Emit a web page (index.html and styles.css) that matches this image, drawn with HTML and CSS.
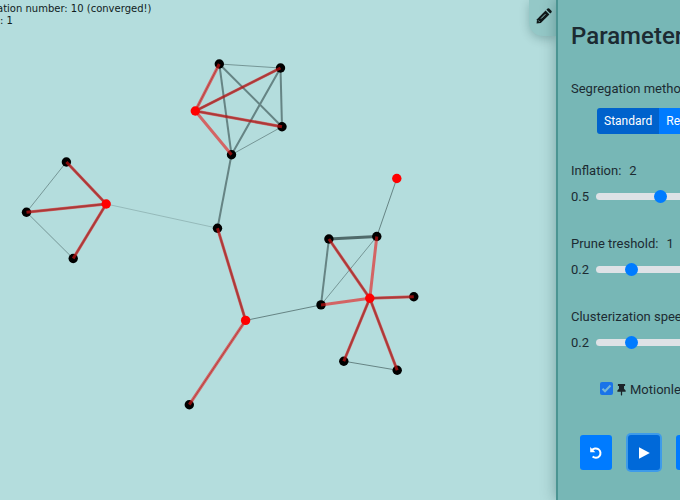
FILE: index.html
```html
<!DOCTYPE html>
<html lang="en">
<head>
<meta charset="utf-8">
<title>Graph clustering</title>
<link rel="stylesheet" href="styles.css">
</head>
<body>
<div class="app">
  <main class="stage">
    <svg class="graph" width="556" height="500" aria-label="Clustered graph">
      <g class="edges">
        <path class="w2" d="M219.300 64L231.500 154.700"/>
        <path class="w1" d="M219.300 64L280.500 68M282 126.700L231.500 154.700"/>
        <path class="w2" d="M219.300 64L282 126.700M280.500 68L231.500 154.700M280.500 68L282 126.700"/>
        <path class="w2" d="M231.500 154.700L217.500 228.200"/>
        <path class="w0" d="M106.200 204L217.500 228.200"/>
        <path class="w1" d="M66.400 162L26.500 212.200L73.200 258.500"/>
        <path class="w1 mid" d="M245.600 320.400L321 304.900M396.800 178.500L376.800 236.500M343.800 361.200L397.200 370.200"/>
        <path class="w1" d="M376.800 236.500L321 304.900"/>
        <path class="w2" d="M328.900 239L321 304.900"/>
        <path class="w3" d="M328.900 239L376.800 236.500"/>
        <path class="core" d="M195.300 111L280.500 68M195.300 111L282 126.700M106.200 204L26.500 212.200M106.200 204L66.400 162M106.200 204L73.200 258.500M217.500 228.200L245.600 320.400M369.800 298.300L328.900 239M369.800 298.300L413.800 296.700M369.800 298.300L343.800 361.200M369.800 298.300L397.200 370.200"/>
        <path class="core thin" d="M195.300 111L219.300 64M245.600 320.400L189.300 404.700"/>
      </g>
      <g class="nodes">
        <circle cx="219.300" cy="64" r="4.700"/><circle cx="280.500" cy="68" r="4.700"/><circle cx="282" cy="126.700" r="4.700"/><circle cx="231.500" cy="154.700" r="4.700"/>
        <circle cx="217.500" cy="228.200" r="4.700"/><circle cx="66.400" cy="162" r="4.700"/><circle cx="26.500" cy="212.200" r="4.700"/><circle cx="73.200" cy="258.500" r="4.700"/>
        <circle cx="189.300" cy="404.700" r="4.700"/><circle cx="321" cy="304.900" r="4.700"/><circle cx="328.900" cy="239" r="4.700"/><circle cx="376.800" cy="236.500" r="4.700"/>
        <circle cx="413.800" cy="296.700" r="4.700"/><circle cx="343.800" cy="361.200" r="4.700"/><circle cx="397.200" cy="370.200" r="4.700"/>
      </g>
      <path class="links" d="M195.300 111L219.300 64M195.300 111L280.500 68M195.300 111L282 126.700M195.300 111L231.500 154.700M106.200 204L66.400 162M106.200 204L26.500 212.200M106.200 204L73.200 258.500M245.600 320.400L217.500 228.200M245.600 320.400L189.300 404.700M369.800 298.300L328.900 239M369.800 298.300L376.800 236.500M369.800 298.300L321 304.900M369.800 298.300L413.800 296.700M369.800 298.300L343.800 361.200M369.800 298.300L397.200 370.200"/>
      <g class="centers">
        <circle cx="195.300" cy="111" r="4.700"/><circle cx="106.200" cy="204" r="4.700"/><circle cx="245.600" cy="320.400" r="4.700"/><circle cx="369.800" cy="298.300" r="4.700"/><circle cx="396.800" cy="178.500" r="4.700"/>
      </g>
    </svg>
    <div class="status"><p class="iteration">ation number: 10 (converged!)</p><p>: 1</p></div>
    <button class="tab" aria-label="Edit"><svg width="16" height="16" viewBox="0 0 16 16"><path d="M1 11.200L9.600 2.600 13.400 6.400 4.800 15 .6 15.400z"/><path d="M10.400 1.800L11.600.6q.8-.8 1.600 0l2.200 2.200q.8.8 0 1.600l-1.200 1.200z"/><path class="pencil-gap" d="M2.400 12.600l1 1M5 10.600L9.400 6.200"/></svg></button>
  </main>
  <aside class="panel">
    <form class="content">
      <h1>Parameters</h1>
      <p class="label">Segregation method:</p>
      <div class="segments"><button type="button" class="on">Standard</button><button type="button">Regular</button></div>
      <div class="field"><div class="name"><label for="inflation">Inflation:</label><output>2</output></div><div class="range"><span>0.5</span><input id="inflation" type="range" min="0.5" max="3" step="any" value="2"></div></div>
      <div class="field"><div class="name"><label for="prune">Prune treshold:</label><output>1</output></div><div class="range"><span>0.2</span><input id="prune" type="range" min="0.2" max="2.9" step="any" value="1"></div></div>
      <div class="field"><div class="name"><label for="speed">Clusterization speed:</label><output>1</output></div><div class="range"><span>0.2</span><input id="speed" type="range" min="0.2" max="2.9" step="any" value="1"></div></div>
      <label class="check"><span class="box"><input type="checkbox" checked><svg class="tick" width="13" height="13" viewBox="0 0 13 13"><path d="M2.500 6.800L5 9.300 10.500 3.500"/></svg></span><svg width="9" height="13" viewBox="0 0 10 14"><path d="M1 1h8v2H7.800v3.200L9.600 8v1.500H5.700V13L5 14l-.7-1V9.500H.4V8l1.800-1.800V3H1z"/></svg><span>Motionless</span></label>
      <div class="actions">
        <button type="button" aria-label="Restart"><svg width="14" height="14" viewBox="0 0 14 14"><path class="arc" d="M2.800 4.600A4.700 4.700 0 1 1 3.600 10.600"/><path d="M1.200 1v5.200h5.200z"/></svg></button>
        <button type="button" class="play" aria-label="Play"><svg width="14" height="14" viewBox="0 0 14 14"><path d="M2 1.300L12.800 7 2 12.700z"/></svg></button>
        <button type="button" aria-label="Step"><svg width="14" height="14" viewBox="0 0 14 14"><path d="M2 1l8 6-8 6zM10 1h2v12h-2z"/></svg></button>
      </div>
    </form>
  </aside>
</div>
</body>
</html>
```
FILE: styles.css
```css
* { box-sizing: border-box; }
body { margin: 0; overflow: hidden; background: #b4dddd; color: #1c2b32; font: 13px/21px Roboto, sans-serif; }
h1, p { margin: 0; }
button, input { font: inherit; margin: 0; }
.app { display: flex; min-height: 100vh; }
.stage { position: relative; flex: 1; min-width: 0; }
.graph { position: absolute; top: 0; left: 0; }
.edges path { fill: none; stroke: #182c2c; }
.edges .w0 { stroke-width: 1; stroke-opacity: .2; }
.edges .w1 { stroke-width: 1; stroke-opacity: .4; }
.edges .mid { stroke-opacity: .5; }
.edges .w2 { stroke-width: 2; stroke-opacity: .5; }
.edges .w3 { stroke-width: 3; stroke-opacity: .65; }
.edges .core { stroke-width: 2; stroke-opacity: .6; }
.edges .thin { stroke-width: 1; stroke-opacity: .5; }
.links { fill: none; stroke: #e81414; stroke-width: 3; stroke-opacity: .6; }
.centers { fill: #f00; }
.status { position: absolute; top: 3px; left: 0; color: #101c1c; font: 10px/12px "DejaVu Sans", sans-serif; white-space: nowrap; }
.iteration { margin-left: -3px; }
.tab { position: absolute; top: 0; right: 0; width: 27px; height: 36px; padding: 0 0 5px 2px; border: 0; border-radius: 0 0 0 14px; background: #94c8c7; box-shadow: 0 3px 10px rgba(0, 50, 50, .25); display: grid; place-items: center; }
.tab svg { fill: #101819; }
.tab .pencil-gap { stroke: #94c8c7; stroke-width: 1; }
.panel { position: relative; flex: 0 0 124px; min-width: 0; border-left: 2px solid #4b9492; background: #77b7b6; box-shadow: 0 0 14px rgba(0, 50, 50, .35); clip-path: inset(0 0 0 -20px); }
.content { width: 240px; padding: 20px 13px; }
h1 { font-size: 24px; line-height: 32px; font-weight: 500; }
.label { margin-top: 26px; }
.segments { display: flex; margin: 9px 0 26px 26px; height: 26px; }
.segments button { border: 0; padding: 0 7px; background: #007bff; color: #fff; font-size: 12px; }
.segments .on { background: #0062cc; border-radius: 3px 0 0 3px; }
.field { margin-bottom: 25px; height: 48px; }
.name { display: flex; gap: 8px; white-space: nowrap; }
.range { display: flex; align-items: center; gap: 7px; margin-top: 5px; }
.range span { flex: 0 0 18px; }
.range input { appearance: none; width: 110px; height: 13px; background: transparent; }
.range input::-webkit-slider-runnable-track { height: 7px; border-radius: 7px; background: #dee2e6; }
.range input::-webkit-slider-thumb { appearance: none; width: 13px; height: 13px; margin-top: -3px; border-radius: 50%; background: #007bff; }
.check { display: flex; align-items: center; gap: 4px; margin-left: 29px; }
.check svg { fill: #1c2429; }
.box { position: relative; width: 13px; height: 15px; }
.box input { display: block; appearance: none; width: 13px; height: 13px; border-radius: 2px; background: #1a73e8; }
.box .tick { position: absolute; top: 0; left: 0; fill: none; stroke: #78b7d6; stroke-width: 2; pointer-events: none; }
.actions { display: flex; gap: 16px; margin: 35px 0 0 9px; }
.actions button { width: 32px; height: 35px; padding: 0; border: 0; border-radius: 3px; background: #007bff; display: grid; place-items: center; }
.actions svg { fill: #fff; }
.actions .arc { fill: none; stroke: #fff; stroke-width: 2; }
.actions .play { background: #0069d9; box-shadow: 0 0 0 2px rgba(38, 143, 255, .7); }
```
